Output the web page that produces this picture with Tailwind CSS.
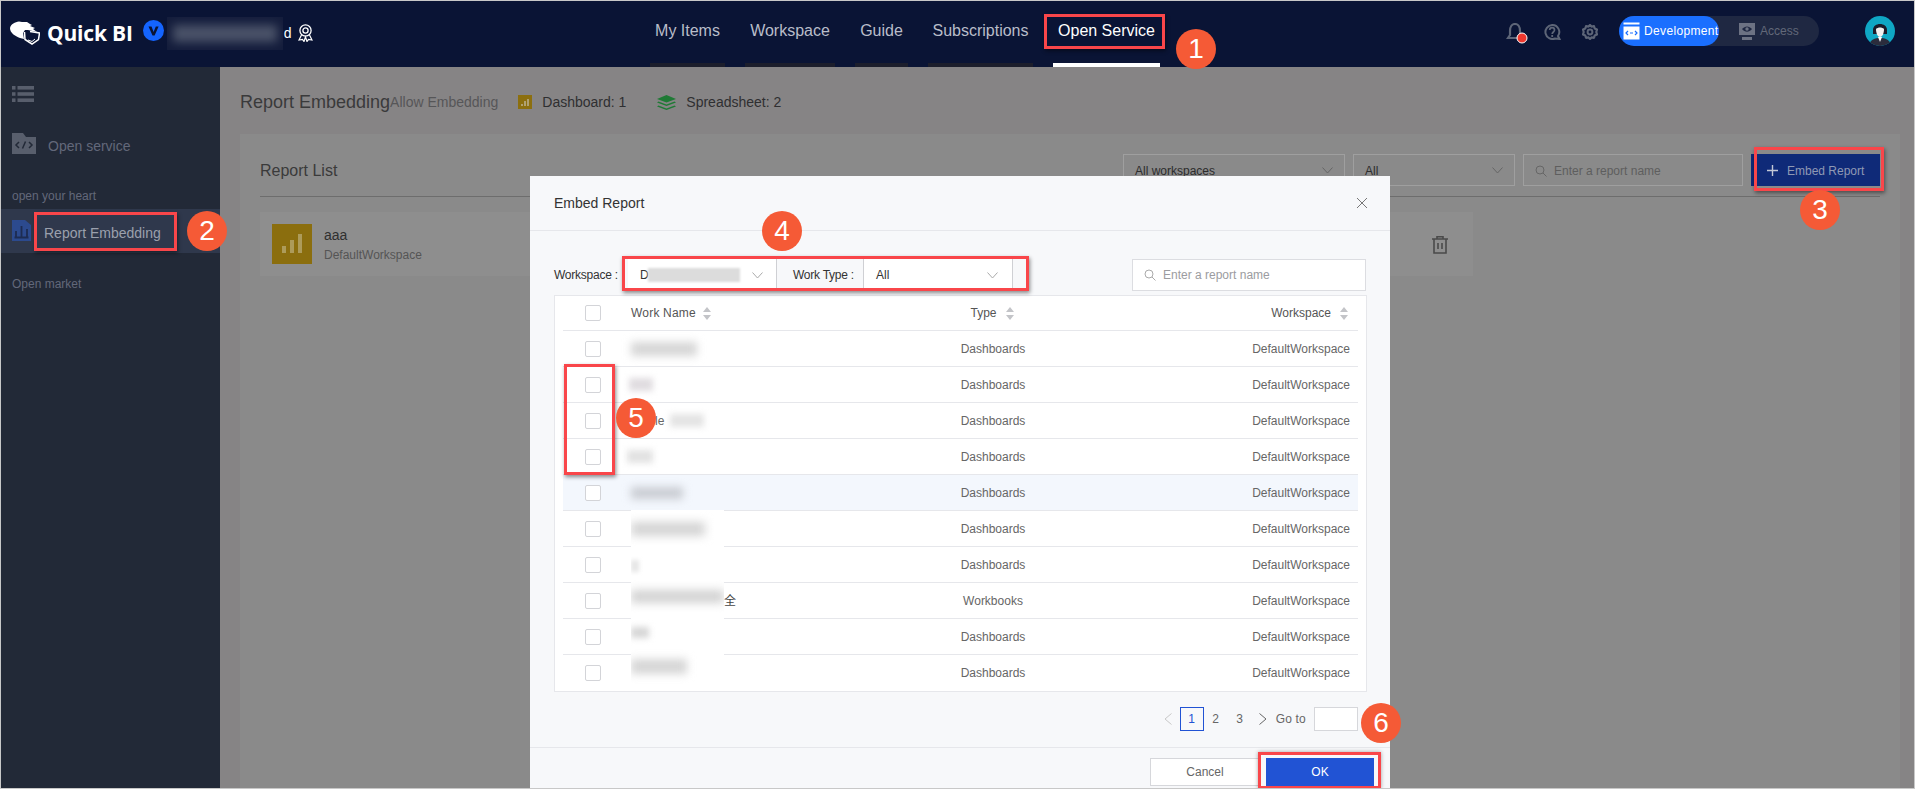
<!DOCTYPE html>
<html lang="en">
<head>
<meta charset="utf-8">
<title>Quick BI - Embed Report</title>
<script src="https://cdn.jsdelivr.net/npm/@tailwindcss/browser@4"></script>
</head>
<body class="m-0">
<div class="relative w-[1915px] h-[789px] overflow-hidden bg-[#868485] font-['Liberation_Sans','Noto_Sans_CJK_SC',sans-serif] flex flex-col">

  <!-- Top bar -->
  <header class="h-[67px] shrink-0 bg-[#0a1435] flex items-stretch">
    <div class="w-[650px] shrink-0 flex items-center pl-[10px] pb-[1px]">
      <svg class="w-[30px] h-[24px] shrink-0" viewBox="0 0 30 24"><path d="M0 7 C1 3 5 1 9 0.5 L12 1 L17 1 L20 3 L22 4 L20 5 L25 7 L23 8 L27 11 L18 9 L15 9 L13 12 L14 18 L10 17 C5 15 0 12 0 7Z" fill="#fff"/><path d="M14.5 11 L15 18.5 L22 23 L28.5 18.5 L29.5 12 L20 10.5" fill="none" stroke="#fff" stroke-width="1.5"/><path d="M18 19 L22 20.5 L25 18" fill="none" stroke="#fff" stroke-width="1"/></svg>
      <span class="ml-[7px] font-['Open_Sans',sans-serif] font-bold text-[21px] leading-[24px] tracking-[-0.2px] text-white whitespace-nowrap">Quick BI</span>
      <svg class="w-[21px] h-[21px] ml-[10px] -mt-[6px] shrink-0" viewBox="0 0 21 21"><circle cx="10.5" cy="10.5" r="10.5" fill="#1464ff"/><path d="M5.5 6.5 H8.5 L10.6 12 L12.8 6.5 H15.6 L11.6 15.5 H9.5Z" fill="#0a1435"/></svg>
      <div class="w-[116px] h-[33px] ml-[3px] overflow-hidden shrink-0 flex items-center bg-[#141d3c]"><div class="ml-[6px] w-[104px] h-[17px] bg-[#4a5268] blur-[5px]"></div></div>
      <span class="ml-[1px] text-[14px] text-white leading-[16px]">d</span>
      <svg class="w-[15px] h-[18px] ml-[7px] shrink-0" viewBox="0 0 15 18" fill="none" stroke="#fff"><circle cx="7.5" cy="6.5" r="5.6" stroke-width="1.3"/><circle cx="7.5" cy="6.5" r="2.6" stroke-width="1.3"/><path d="M3.5 11 L1 16 L4.5 15.5 L6 17.5 L7.5 13 L9 17.5 L10.5 15.5 L14 16 L11.5 11" stroke-width="1.2"/></svg>
    </div>
    <nav class="flex gap-[20px] h-full">
      <a class="w-[75px] h-full flex flex-col justify-between text-center text-[#b9bdc9]"><span class="pt-[21px] text-[16px] leading-[20px] whitespace-nowrap">My Items</span><i class="block h-[4px] bg-[#1c1e2c]"></i></a>
      <a class="w-[90px] h-full flex flex-col justify-between text-center text-[#b9bdc9]"><span class="pt-[21px] text-[16px] leading-[20px] whitespace-nowrap">Workspace</span><i class="block h-[4px] bg-[#1c1e2c]"></i></a>
      <a class="w-[53px] h-full flex flex-col justify-between text-center text-[#b9bdc9]"><span class="pt-[21px] text-[16px] leading-[20px] whitespace-nowrap">Guide</span><i class="block h-[4px] bg-[#1c1e2c]"></i></a>
      <a class="w-[105px] h-full flex flex-col justify-between text-center text-[#b9bdc9]"><span class="pt-[21px] text-[16px] leading-[20px] whitespace-nowrap">Subscriptions</span><i class="block h-[4px] bg-[#1c1e2c]"></i></a>
      <a class="w-[107px] h-full flex flex-col justify-between text-center text-white"><span class="pt-[21px] text-[16px] leading-[20px] whitespace-nowrap">Open Service</span><i class="block h-[4px] bg-white"></i></a>
    </nav>
    <div class="ml-auto pr-[20px] pt-[16px] flex items-start">
      <svg class="w-[22px] h-[22px] mt-[7px] shrink-0" viewBox="0 0 22 22"><path d="M9 1 C12 1 14 4 14 8 L14 12 L16 15 H2 L4 12 L4 8 C4 4 6 1 9 1Z" fill="none" stroke="#5d6577" stroke-width="2.2"/><circle cx="16" cy="15" r="5" fill="#f0382e" stroke="#fff" stroke-width="1"/></svg>
      <svg class="w-[17px] h-[16px] ml-[16px] mt-[8px] shrink-0" viewBox="0 0 17 16" fill="none" stroke="#5d6577"><path d="M8 1 A7 7 0 1 0 11 14.5 L15.5 15 L14 12 A7 7 0 0 0 8 1Z" stroke-width="2"/><path d="M5.7 6 C5.8 2.8 10.5 3 10.5 6 C10.5 8 8.2 8 8.2 10" stroke-width="1.7"/><path d="M8.2 11 V13" stroke-width="1.8"/></svg>
      <svg class="w-[16px] h-[16px] ml-[21px] mt-[8px] shrink-0" viewBox="0 0 16 16" fill="none" stroke="#5d6577"><path d="M8 1 L9.5 2.6 L12 2.2 L12.7 4.5 L15 5.5 L14.3 8 L15 10.5 L12.7 11.5 L12 13.8 L9.5 13.4 L8 15 L6.5 13.4 L4 13.8 L3.3 11.5 L1 10.5 L1.7 8 L1 5.5 L3.3 4.5 L4 2.2 L6.5 2.6Z" stroke-width="2.2" stroke-linejoin="round"/><circle cx="8" cy="8" r="2.4" stroke-width="2"/></svg>
      <div class="w-[200px] h-[30px] ml-[21px] rounded-full bg-[#1f2842] flex items-center shrink-0">
        <div class="w-[100px] h-[30px] rounded-full bg-[#1a6fff] flex items-center pl-[4px] gap-[4px]">
          <svg class="w-[17px] h-[18px] shrink-0" viewBox="0 0 17 18"><path d="M0.5 0.5 H16.5 V2.5 H0.5Z M0.5 4.5 H16.5 V17.5 H0.5Z" fill="#fff"/><path d="M5 9 L3 11 L5 13 M12 9 L14 11 L12 13 M7 11 H10" fill="none" stroke="#1a6fff" stroke-width="1.2"/></svg>
          <span class="text-[12px] leading-[16px] text-white whitespace-nowrap tracking-[0.35px]">Development</span>
        </div>
        <svg class="w-[16px] h-[17px] ml-[20px] shrink-0" viewBox="0 0 16 17"><rect x="0" y="0" width="16" height="12" fill="#6c7283"/><path d="M3 6 C6 2.5 10 2.5 13 6 C10 9.5 6 9.5 3 6Z" fill="#1f2842"/><circle cx="8" cy="6" r="1.7" fill="#6c7283"/><rect x="3" y="14" width="10" height="3" fill="#6c7283"/></svg>
        <span class="ml-[5px] text-[12px] leading-[16px] text-[#626879] whitespace-nowrap">Access</span>
      </div>
      <svg class="w-[30px] h-[30px] ml-[46px] shrink-0" viewBox="0 0 30 30"><defs><clipPath id="av"><ellipse cx="15" cy="15" rx="15" ry="15"/></clipPath></defs><g clip-path="url(#av)"><rect width="30" height="30" fill="#0fa7c4"/><path d="M8 14 C8 6 22 6 22 14 L22 18 H8Z" fill="#1a1c2a"/><path d="M11 13 C13 11 17 11 19 13 C19 18 17 21 15 21 C13 21 11 18 11 13Z" fill="#f3f1ef"/><path d="M4 30 C5 23 10 22 15 22 C20 22 25 23 26 30Z" fill="#2b2c3c"/><path d="M13 21 L15 26 L17 21Z" fill="#fff"/></g></svg>
    </div>
  </header>

  <div class="flex flex-1 min-h-0">
    <!-- Sidebar -->
    <aside class="w-[220px] shrink-0 bg-[#222937] text-[#62687a] flex flex-col">
      <svg class="w-[22px] h-[16px] mt-[19px] ml-[12px] shrink-0" viewBox="0 0 22 16" fill="#585e6c"><rect x="0" y="0" width="3.5" height="3.6"/><rect x="5.5" y="0" width="16.5" height="3.6"/><rect x="0" y="6.2" width="3.5" height="3.6"/><rect x="5.5" y="6.2" width="16.5" height="3.6"/><rect x="0" y="12.4" width="3.5" height="3.6"/><rect x="5.5" y="12.4" width="16.5" height="3.6"/></svg>
      <div class="flex items-end mt-[31px] pl-[12px] h-[21px]">
        <svg class="w-[24px] h-[21px] shrink-0" viewBox="0 0 24 21"><path d="M0 0 H11 L14 4 H24 V21 H0Z" fill="#585e6c"/><path d="M7 9 L4 12 L7 15 M17 9 L20 12 L17 15 M13.5 8.5 L10.5 15.5" fill="none" stroke="#222937" stroke-width="1.5"/></svg>
        <span class="ml-[12px] text-[14px] leading-[16px] whitespace-nowrap">Open service</span>
      </div>
      <div class="mt-[35px] pl-[12px] text-[12px] leading-[14px] whitespace-nowrap">open your heart</div>
      <div class="mt-[6px] h-[44px] bg-[#2f384c] flex items-center pl-[12px]">
        <svg class="w-[19px] h-[21px] -mt-[1px] shrink-0" viewBox="0 0 19 21"><path d="M0 0 H13 L19 5 V21 H0Z" fill="#2c4a8e"/><path d="M4 11 V17 M9.5 6 V17 M15 9 V17 M2.5 17.5 H16.5" fill="none" stroke="#1d2c52" stroke-width="1.8"/></svg>
        <span class="ml-[13px] pt-[4px] text-[14px] leading-[16px] text-[#9ba0ad] whitespace-nowrap">Report Embedding</span>
      </div>
      <div class="mt-[24px] pl-[12px] text-[12px] leading-[14px] whitespace-nowrap">Open market</div>
    </aside>

    <!-- Main -->
    <main class="flex-1 pl-[20px] pr-[15px] flex flex-col min-w-0">
      <div class="h-[67px] shrink-0 flex items-center pt-[3px]">
        <span class="text-[18px] leading-[24px] text-[#3a3a3b] whitespace-nowrap">Report Embedding</span>
        <span class="text-[14px] leading-[20px] text-[#565658] whitespace-nowrap">Allow Embedding</span>
        <span class="ml-[20px] w-[14px] h-[14px] bg-[#8c6f0f] flex items-end justify-center gap-[1px] pb-[3px] shrink-0"><i class="block w-[2px] h-[2px] bg-[#b0a172]"></i><i class="block w-[2px] h-[5px] bg-[#b0a172]"></i><i class="block w-[2px] h-[7px] bg-[#b0a172]"></i></span>
        <span class="ml-[10px] text-[14px] leading-[20px] text-[#2f2f31] whitespace-nowrap">Dashboard: 1</span>
        <svg class="w-[19px] h-[15px] ml-[31px] shrink-0" viewBox="0 0 19 15" fill="#1f7a35"><path d="M9.5 0 L19 4 L9.5 7.5 L0 4Z"/><path d="M1.5 6.5 L9.5 9.5 L17.5 6.5 L19 7.5 L9.5 11 L0 7.5Z"/><path d="M1.5 10.5 L9.5 13.5 L17.5 10.5 L19 11.5 L9.5 15 L0 11.5Z"/></svg>
        <span class="ml-[10px] text-[14px] leading-[20px] text-[#2f2f31] whitespace-nowrap">Spreadsheet: 2</span>
      </div>
      <section class="flex-1 bg-[#8a8a8a] px-[20px] min-h-0">
        <div class="h-[63px] border-b border-[#6d6d6d] flex items-start justify-between pt-[20px]">
          <span class="pt-[1px] text-[16px] leading-[32px] text-[#3a3a3a] whitespace-nowrap">Report List</span>
          <div class="flex gap-[8px]">
            <div class="w-[222px] h-[32px] border border-[#9f9f9f] flex items-center justify-between pt-[1px] px-[11px] text-[12px] text-[#2c2c2c]">All workspaces<svg class="w-[11px] h-[7px]" viewBox="0 0 11 7" fill="none" stroke="#666"><path d="M0.5 0.5 L5.5 6 L10.5 0.5"/></svg></div>
            <div class="w-[162px] h-[32px] border border-[#9f9f9f] flex items-center justify-between pt-[1px] px-[11px] text-[12px] text-[#2c2c2c]">All<svg class="w-[11px] h-[7px]" viewBox="0 0 11 7" fill="none" stroke="#666"><path d="M0.5 0.5 L5.5 6 L10.5 0.5"/></svg></div>
            <div class="w-[220px] h-[32px] border border-[#9f9f9f] flex items-center pt-[1px] px-[11px] gap-[7px] text-[12px] text-[#5e5e5e]"><svg class="w-[12px] h-[12px]" viewBox="0 0 12 12" fill="none" stroke="#666"><circle cx="5" cy="5" r="4"/><path d="M8 8 L11.5 11.5"/></svg>Enter a report name</div>
            <div class="w-[129px] h-[32px] bg-[#0f2a78] flex items-center pt-[1px] pl-[16px] gap-[9px] text-[12px] text-[#8f99b4]"><svg class="w-[11px] h-[11px]" viewBox="0 0 11 11" stroke="#c3c8d6" stroke-width="1.4"><path d="M5.5 0 V11 M0 5.5 H11"/></svg>Embed Report</div>
          </div>
        </div>
        <div class="mt-[15px] w-[1213px] h-[64px] bg-[#8e8e8e] flex items-center pl-[12px] pr-[25px]">
          <div class="w-[40px] h-[40px] bg-[#8b6e0e] flex items-end justify-center gap-[4px] pb-[11px] shrink-0"><i class="block w-[4px] h-[7px] bg-[#ad9b5a]"></i><i class="block w-[4px] h-[13px] bg-[#ad9b5a]"></i><i class="block w-[4px] h-[19px] bg-[#ad9b5a]"></i></div>
          <div class="ml-[12px]"><div class="text-[14px] leading-[18px] text-[#303030]">aaa</div><div class="mt-[3px] text-[12px] leading-[16px] text-[#555]">DefaultWorkspace</div></div>
          <svg class="w-[16px] h-[18px] ml-auto mt-[2px] shrink-0" viewBox="0 0 16 18" fill="none" stroke="#4a4a4a" stroke-width="1.6"><path d="M0 3 H16 M5 3 V0.8 H11 V3 M2 3 V17 H14 V3 M6 7 V13 M10 7 V13"/></svg>
        </div>
      </section>
    </main>
  </div>

  <!-- Modal -->
  <div class="absolute left-[530px] top-[176px] w-[860px] h-[613px] bg-[#f7f8fa] flex flex-col">
    <div class="h-[55px] shrink-0 border-b border-[#e6e7eb] flex items-center justify-between pl-[24px] pr-[23px]">
      <span class="text-[14px] leading-[20px] text-[#333]">Embed Report</span>
      <svg class="w-[10px] h-[10px]" viewBox="0 0 10 10" stroke="#777"><path d="M0 0 L10 10 M10 0 L0 10"/></svg>
    </div>
    <div class="mt-[27px] h-[33px] shrink-0 flex items-center pl-[24px] pr-[24px]">
      <span class="w-[74px] pt-[1px] text-[12px] text-[#333] whitespace-nowrap tracking-[-0.25px]">Workspace :</span>
      <div class="w-[149px] h-[32px] bg-white border-r border-[#cfd0d4] flex items-center justify-between pt-[1px] pl-[12px] pr-[13px] text-[12px] text-[#333]">
        <div class="flex items-center">D<span class="block w-[92px] h-[14px] bg-[#dcdcdc] blur-[1px] ml-[-1px]"></span></div>
        <svg class="w-[11px] h-[7px]" viewBox="0 0 11 7" fill="none" stroke="#aaa"><path d="M0.5 0.5 L5.5 6 L10.5 0.5"/></svg>
      </div>
      <span class="w-[86px] pl-[16px] pt-[1px] text-[12px] text-[#333] whitespace-nowrap tracking-[-0.25px]">Work Type :</span>
      <div class="w-[150px] h-[32px] bg-white border-l border-r border-[#cfd0d4] flex items-center justify-between pt-[1px] pl-[12px] pr-[14px] text-[12px] text-[#333]">All
        <svg class="w-[11px] h-[7px]" viewBox="0 0 11 7" fill="none" stroke="#aaa"><path d="M0.5 0.5 L5.5 6 L10.5 0.5"/></svg>
      </div>
      <div class="ml-auto w-[234px] h-[32px] bg-white border border-[#dcdde1] flex items-center pt-[1px] pl-[11px] gap-[7px] text-[12px] text-[#9b9ca0]"><svg class="w-[12px] h-[12px]" viewBox="0 0 12 12" fill="none" stroke="#aaa"><circle cx="5" cy="5" r="4"/><path d="M8 8 L11.5 11.5"/></svg>Enter a report name</div>
    </div>
    <div class="mt-[4px] ml-[24px] w-[813px] h-[397px] shrink-0 bg-white border border-[#e6e7eb] px-[8px] text-[12px] text-[#666]">
      <div class="h-[35px] border-b border-[#e6e7eb] flex items-center text-[#555]">
        <span class="w-[16px] h-[16px] ml-[22px] border border-[#d3d4d8] rounded-[2px] shrink-0"></span>
        <div class="w-[299px] ml-[30px] shrink-0 flex items-center tracking-[0.2px]">Work Name<svg class="ml-[7px] w-[8px] h-[13px]" viewBox="0 0 8 13" fill="#c3c4c8"><path d="M4 0 L8 5 H0Z M0 8 H8 L4 13Z"/></svg></div>
        <div class="w-[126px] shrink-0 flex items-center justify-center pr-[2px]">Type<svg class="ml-[9px] w-[8px] h-[13px]" viewBox="0 0 8 13" fill="#c3c4c8"><path d="M4 0 L8 5 H0Z M0 8 H8 L4 13Z"/></svg></div>
        <div class="flex-1 flex items-center justify-end pr-[10px]">Workspace<svg class="ml-[9px] w-[8px] h-[13px]" viewBox="0 0 8 13" fill="#c3c4c8"><path d="M4 0 L8 5 H0Z M0 8 H8 L4 13Z"/></svg></div>
      </div>
      <div class="h-[36px] border-b border-[#e6e7eb] flex items-center">
        <span class="w-[16px] h-[16px] ml-[22px] border border-[#d3d4d8] rounded-[2px] shrink-0"></span>
        <div class="w-[299px] ml-[30px] shrink-0"><div class="w-[66px] h-[14px] bg-[#d6d6d6] blur-[4px]"></div></div>
        <div class="w-[126px] shrink-0 text-center">Dashboards</div><div class="flex-1 text-right pr-[8px]">DefaultWorkspace</div>
      </div>
      <div class="h-[36px] border-b border-[#e6e7eb] flex items-center">
        <span class="w-[16px] h-[16px] ml-[22px] border border-[#d3d4d8] rounded-[2px] shrink-0"></span>
        <div class="w-[299px] ml-[30px] shrink-0"><div class="-ml-[2px] w-[24px] h-[13px] bg-[#e0dce0] blur-[3px]"></div></div>
        <div class="w-[126px] shrink-0 text-center">Dashboards</div><div class="flex-1 text-right pr-[8px]">DefaultWorkspace</div>
      </div>
      <div class="h-[36px] border-b border-[#e6e7eb] flex items-center">
        <span class="w-[16px] h-[16px] ml-[22px] border border-[#d3d4d8] rounded-[2px] shrink-0"></span>
        <div class="w-[299px] ml-[30px] shrink-0 flex items-center pl-[24px]">le<span class="block w-[34px] h-[13px] ml-[6px] bg-[#e4e4e4] blur-[3px]"></span></div>
        <div class="w-[126px] shrink-0 text-center">Dashboards</div><div class="flex-1 text-right pr-[8px]">DefaultWorkspace</div>
      </div>
      <div class="h-[36px] border-b border-[#e6e7eb] flex items-center">
        <span class="w-[16px] h-[16px] ml-[22px] border border-[#d3d4d8] rounded-[2px] shrink-0"></span>
        <div class="w-[299px] ml-[30px] shrink-0"><div class="-ml-[4px] w-[26px] h-[13px] bg-[#e2e2e2] blur-[3px]"></div></div>
        <div class="w-[126px] shrink-0 text-center">Dashboards</div><div class="flex-1 text-right pr-[8px]">DefaultWorkspace</div>
      </div>
      <div class="h-[36px] border-b border-[#e6e7eb] bg-[#f3f7fd] flex items-center">
        <span class="w-[16px] h-[16px] ml-[22px] bg-white border border-[#d3d4d8] rounded-[2px] shrink-0"></span>
        <div class="w-[299px] ml-[30px] shrink-0"><div class="w-[52px] h-[12px] bg-[#c9ccd2] blur-[4px]"></div></div>
        <div class="w-[126px] shrink-0 text-center">Dashboards</div><div class="flex-1 text-right pr-[8px]">DefaultWorkspace</div>
      </div>
      <div class="h-[36px] border-b border-[#e6e7eb] flex items-center">
        <span class="w-[16px] h-[16px] ml-[22px] border border-[#d3d4d8] rounded-[2px] shrink-0"></span>
        <div class="w-[299px] ml-[30px] shrink-0"></div>
        <div class="w-[126px] shrink-0 text-center">Dashboards</div><div class="flex-1 text-right pr-[8px]">DefaultWorkspace</div>
      </div>
      <div class="h-[36px] border-b border-[#e6e7eb] flex items-center">
        <span class="w-[16px] h-[16px] ml-[22px] border border-[#d3d4d8] rounded-[2px] shrink-0"></span>
        <div class="w-[299px] ml-[30px] shrink-0"></div>
        <div class="w-[126px] shrink-0 text-center">Dashboards</div><div class="flex-1 text-right pr-[8px]">DefaultWorkspace</div>
      </div>
      <div class="h-[36px] border-b border-[#e6e7eb] flex items-center">
        <span class="w-[16px] h-[16px] ml-[22px] border border-[#d3d4d8] rounded-[2px] shrink-0"></span>
        <div class="w-[299px] ml-[30px] shrink-0 pl-[93px] text-[#444]">全</div>
        <div class="w-[126px] shrink-0 text-center">Workbooks</div><div class="flex-1 text-right pr-[8px]">DefaultWorkspace</div>
      </div>
      <div class="h-[36px] border-b border-[#e6e7eb] flex items-center">
        <span class="w-[16px] h-[16px] ml-[22px] border border-[#d3d4d8] rounded-[2px] shrink-0"></span>
        <div class="w-[299px] ml-[30px] shrink-0"></div>
        <div class="w-[126px] shrink-0 text-center">Dashboards</div><div class="flex-1 text-right pr-[8px]">DefaultWorkspace</div>
      </div>
      <div class="h-[35px] flex items-center">
        <span class="w-[16px] h-[16px] ml-[22px] border border-[#d3d4d8] rounded-[2px] shrink-0"></span>
        <div class="w-[299px] ml-[30px] shrink-0"></div>
        <div class="w-[126px] shrink-0 text-center">Dashboards</div><div class="flex-1 text-right pr-[8px]">DefaultWorkspace</div>
      </div>
    </div>
    <div class="mt-[15px] h-[24px] shrink-0 flex items-center justify-end pr-[32px] text-[12px] text-[#666]">
      <svg class="w-[8px] h-[12px]" viewBox="0 0 8 12" fill="none" stroke="#c8c8c8"><path d="M7.5 0.5 L1 6 L7.5 11.5"/></svg>
      <span class="ml-[8px] w-[24px] h-[24px] border border-[#2153d4] text-[#2153d4] flex items-center justify-center">1</span>
      <span class="w-[24px] text-center">2</span>
      <span class="w-[24px] text-center">3</span>
      <svg class="ml-[7px] w-[8px] h-[12px]" viewBox="0 0 8 12" fill="none" stroke="#666"><path d="M0.5 0.5 L7 6 L0.5 11.5"/></svg>
      <span class="ml-[9px] tracking-[0.2px]">Go to</span>
      <span class="ml-[8px] w-[44px] h-[24px] bg-white border border-[#d6d7db]"></span>
    </div>
    <div class="mt-[16px] flex-1 border-t border-[#e6e7eb] flex items-start justify-end pt-[10px] pr-[16px] gap-[6px] text-[12px]">
      <button class="w-[110px] h-[28px] bg-white border border-[#d6d7db] text-[#666]">Cancel</button>
      <button class="w-[108px] h-[28px] bg-[#2153d4] text-white">OK</button>
    </div>
  </div>

  <!-- Redaction patch over the lower names -->
  <div class="absolute left-[631px] top-[510px] w-[93px] h-[174px] bg-white overflow-hidden flex flex-col pt-[12px]">
    <div class="w-[74px] h-[14px] bg-[#d4d4d4] blur-[5px] shrink-0"></div>
    <div class="mt-[24px] w-[8px] h-[12px] bg-[#e6e6e6] blur-[2px] shrink-0"></div>
    <div class="mt-[18px] w-[93px] h-[13px] bg-[#d2d2d2] blur-[5px] shrink-0"></div>
    <div class="mt-[24px] w-[18px] h-[11px] bg-[#d6d6d6] blur-[3px] shrink-0"></div>
    <div class="mt-[21px] w-[56px] h-[15px] bg-[#d6d6d6] blur-[4px] shrink-0"></div>
  </div>

  <!-- Callout frames -->
  <div class="absolute left-[1044px] top-[14px] w-[121px] h-[35px] border-[3px] border-[#f9464a] shadow-[1px_2px_4px_rgba(0,0,0,0.45)]"></div>
  <div class="absolute left-[34px] top-[212px] w-[143px] h-[39px] border-[3px] border-[#f9464a] shadow-[1px_2px_4px_rgba(0,0,0,0.45)]"></div>
  <div class="absolute left-[1754px] top-[147px] w-[130px] h-[44px] border-[3px] border-[#f9464a] shadow-[1px_2px_4px_rgba(0,0,0,0.45)]"></div>
  <div class="absolute left-[622px] top-[256px] w-[407px] h-[35px] border-[3px] border-[#f9464a] shadow-[1px_2px_4px_rgba(0,0,0,0.45)]"></div>
  <div class="absolute left-[564px] top-[364px] w-[51px] h-[111px] border-[3px] border-[#f9464a] shadow-[1px_2px_4px_rgba(0,0,0,0.45)]"></div>
  <div class="absolute left-[1258px] top-[752px] w-[123px] h-[37px] border-[3px] border-[#f9464a] shadow-[0_0_4px_rgba(0,0,0,0.35)]"></div>

  <!-- Numbered badges -->
  <div class="absolute left-[1176px] top-[29px] w-[40px] h-[40px] rounded-full bg-[#f55a36] text-white text-[28px] flex items-center justify-center">1</div>
  <div class="absolute left-[187px] top-[211px] w-[40px] h-[40px] rounded-full bg-[#f55a36] text-white text-[28px] flex items-center justify-center">2</div>
  <div class="absolute left-[1800px] top-[190px] w-[40px] h-[40px] rounded-full bg-[#f55a36] text-white text-[28px] flex items-center justify-center">3</div>
  <div class="absolute left-[762px] top-[211px] w-[40px] h-[40px] rounded-full bg-[#f55a36] text-white text-[28px] flex items-center justify-center">4</div>
  <div class="absolute left-[616px] top-[398px] w-[40px] h-[40px] rounded-full bg-[#f55a36] text-white text-[28px] flex items-center justify-center">5</div>
  <div class="absolute left-[1361px] top-[703px] w-[40px] h-[40px] rounded-full bg-[#f55a36] text-white text-[28px] flex items-center justify-center">6</div>

  <!-- Screenshot frame -->
  <div class="absolute inset-0 border border-[#c8c8c8] pointer-events-none"></div>
</div>
</body>
</html>
